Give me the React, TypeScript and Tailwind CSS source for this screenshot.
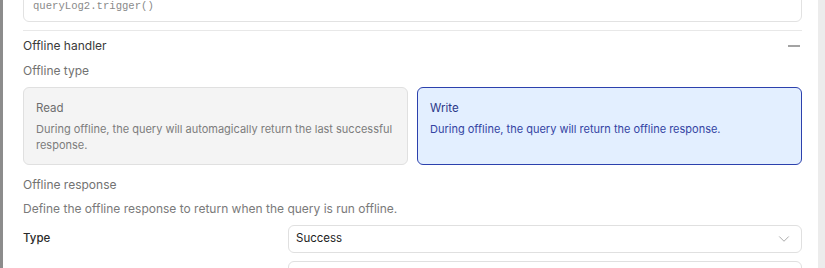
import { ChevronDown } from 'lucide-react';

const App = () => {
  return (
    <div className="w-[825px] h-[268px] flex overflow-hidden bg-white font-['Inter',sans-serif]">
      {/* left edge */}
      <div className="w-[3px] shrink-0 bg-[#8c8c8c]" />

      <div className="flex-1 pl-[20px] pr-[16px]">
        {/* code editor (scrolled) */}
        <div className="-mt-[20px] h-[42px] rounded-[6px] border border-[#e2e2e2] px-[9px] pt-[18px]">
          <div className="font-['Liberation_Mono',monospace] text-[10.6px] leading-[14px] text-[#8a8a8a]">
            queryLog2.trigger()
          </div>
        </div>

        <div className="mt-[8px] border-t border-[#e8e8e8]" />

        {/* section header */}
        <div className="pt-[7px] flex items-center justify-between">
          <span className="text-[12px] leading-[16px] text-[#3a3a3a]">Offline handler</span>
          <span className="mr-[2px] h-[2px] w-[12px] bg-[#a3a3a3]" />
        </div>

        <div className="mt-[9px] text-[12px] leading-[16px] text-[#727272]">Offline type</div>

        <div className="mt-[8px] grid grid-cols-2 gap-[9px]">
          <div className="h-[78px] rounded-[6px] border border-[#e0e0e0] bg-[#f4f4f4] px-[12px] pt-[12px]">
            <div className="text-[11.5px] leading-[16px] text-[#6e6e6e]">Read</div>
            <p className="mt-[5px] text-[11px] leading-[16px] text-[#7c7c7c]">
              During offline, the query will automagically return the last successful response.
            </p>
          </div>
          <div className="h-[78px] rounded-[6px] border border-[#2c41ad] bg-[#e3efff] px-[12px] pt-[12px]">
            <div className="text-[11.5px] leading-[16px] text-[#2c3889]">Write</div>
            <p className="mt-[5px] text-[11px] leading-[16px] text-[#3344a3]">
              During offline, the query will return the offline response.
            </p>
          </div>
        </div>

        <div className="mt-[12px] text-[12px] leading-[16px] text-[#727272]">Offline response</div>
        <div className="mt-[8px] text-[12px] leading-[16px] text-[#7a7a7a]">
          Define the offline response to return when the query is run offline.
        </div>

        {/* type select */}
        <div className="mt-[8px] flex items-center">
          <span className="w-[265px] shrink-0 text-[11.5px] font-medium text-[#2a2a2a]">Type</span>
          <div className="flex h-[28px] flex-1 items-center justify-between rounded-[6px] border border-[#e0e0e0] pl-[7px] pr-[8px]">
            <span className="text-[11.5px] text-[#222]">Success</span>
            <ChevronDown size={18} strokeWidth={1} className="text-[#8f8f8f]" />
          </div>
        </div>

        <div className="mt-[8px] flex">
          <span className="w-[265px] shrink-0" />
          <div className="h-[28px] flex-1 rounded-[6px] border border-[#e0e0e0]" />
        </div>
      </div>

      {/* scrollbar track */}
      <div className="w-[7px] shrink-0 bg-[#ececec]" />
    </div>
  );
};

export default App;
